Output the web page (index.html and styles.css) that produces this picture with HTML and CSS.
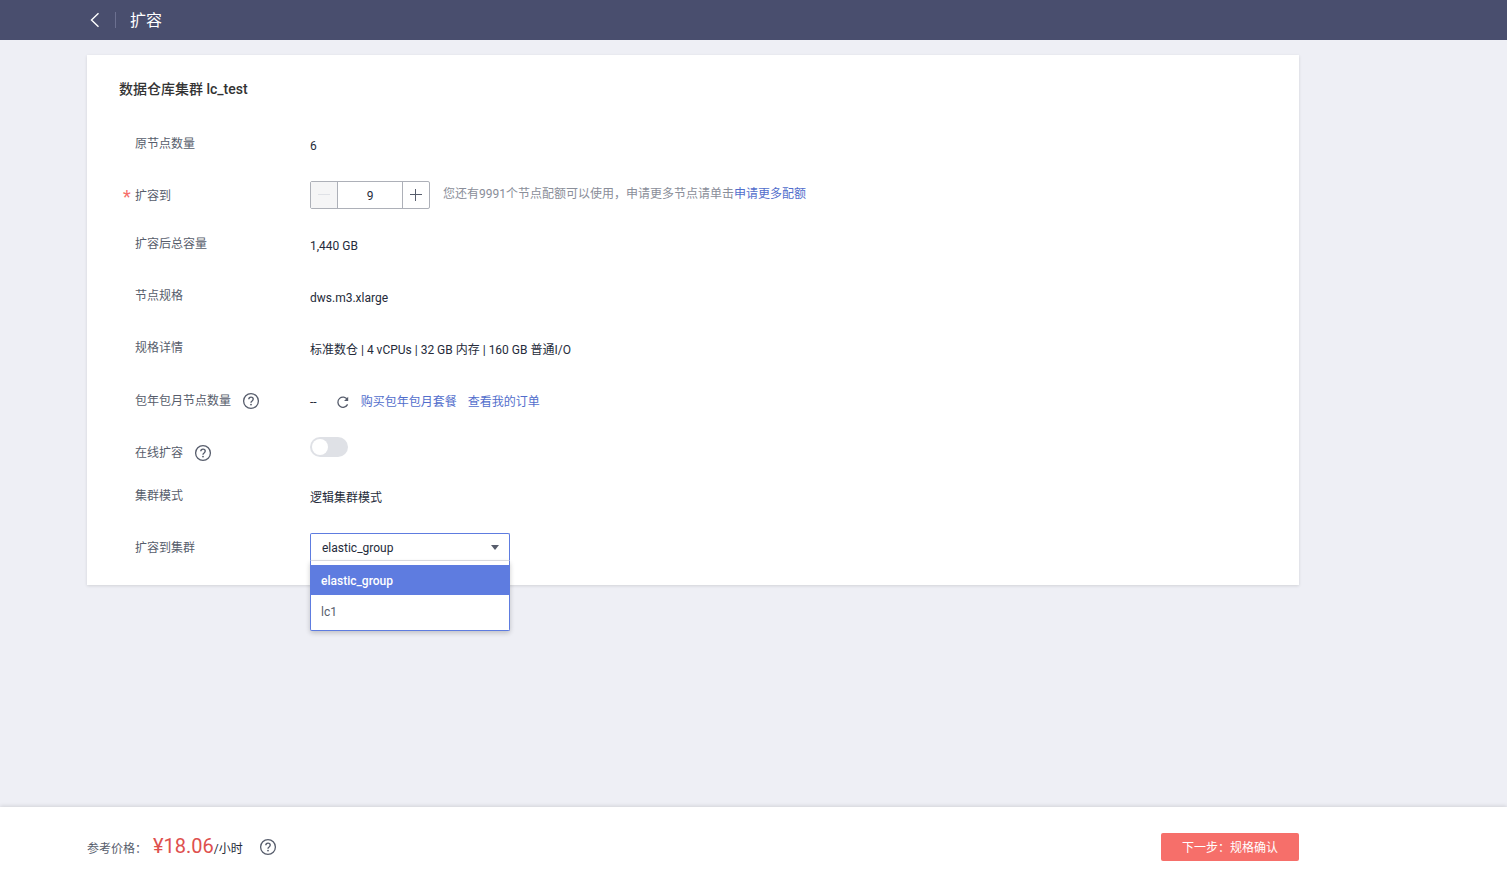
FILE: index.html
```html
<!DOCTYPE html>
<html lang="zh-CN">
<head>
  <meta charset="UTF-8">
  <meta name="viewport" content="width=device-width, initial-scale=1">
  <title>扩容</title>
  <link rel="stylesheet" href="styles.css">
</head>
<body>

  <svg class="sprite" aria-hidden="true">
    <symbol id="help" viewBox="0 0 18 18">
      <circle cx="9" cy="9" r="7.4" fill="none" stroke="currentColor" stroke-width="1.3"/>
      <path d="M6.8 7.3C6.8 5.9 7.7 5.1 9 5.1s2.2.8 2.2 2c0 .9-.5 1.4-1.1 1.9-.7.5-1.1.9-1.1 1.7" fill="none" stroke="currentColor" stroke-width="1.4"/>
      <circle cx="9" cy="12.6" r=".9" fill="currentColor"/>
    </symbol>
  </svg>

  <header class="topbar">
    <a class="back" href="#" aria-label="返回">
      <svg width="10" height="16" viewBox="0 0 10 16"><path d="M8.5 1.2L1.5 8l7 6.8" fill="none" stroke="currentColor" stroke-width="1.4"/></svg>
    </a>
    <h1>扩容</h1>
  </header>

  <main>
    <form class="card" id="resize">
      <h2>数据仓库集群 lc_test</h2>

      <div class="row">
        <span class="label">原节点数量</span>
        <div class="value">6</div>
      </div>

      <div class="row control-row">
        <label class="label required" for="nodes">扩容到</label>
        <div class="stepper">
          <button type="button" aria-label="减少" disabled>
            <svg width="12" height="12" viewBox="0 0 12 12"><path d="M0 5.5h12" stroke="currentColor"/></svg>
          </button>
          <input id="nodes" type="text" inputmode="numeric" value="9">
          <button type="button" aria-label="增加">
            <svg width="12" height="12" viewBox="0 0 12 12"><path d="M0 5.5h12M5.5 0v12" stroke="currentColor"/></svg>
          </button>
        </div>
        <p class="tip">您还有9991个节点配额可以使用，申请更多节点请单击<a href="#">申请更多配额</a></p>
      </div>

      <div class="row">
        <span class="label">扩容后总容量</span>
        <div class="value">1,440 GB</div>
      </div>

      <div class="row">
        <span class="label">节点规格</span>
        <div class="value">dws.m3.xlarge</div>
      </div>

      <div class="row">
        <span class="label">规格详情</span>
        <div class="value">标准数仓 | 4 vCPUs | 32 GB 内存 | 160 GB 普通I/O</div>
      </div>

      <div class="row package-row">
        <span class="label">包年包月节点数量
          <button type="button" class="help" aria-label="帮助"><svg><use href="#help"/></svg></button>
        </span>
        <div class="package">
          <span>--</span>
          <button type="button" class="refresh" aria-label="刷新">
            <svg width="14" height="14" viewBox="0 0 14 14"><path d="M11.6 9.4A5.1 5.1 0 1 1 11.4 4.6" fill="none" stroke="currentColor" stroke-width="1.3"/><path d="M12.2 1.8v4.1H8.1z" fill="currentColor"/></svg>
          </button>
          <a href="#">购买包年包月套餐</a>
          <a href="#">查看我的订单</a>
        </div>
      </div>

      <div class="row switch-row">
        <span class="label"><label for="online">在线扩容</label>
          <button type="button" class="help" aria-label="帮助"><svg><use href="#help"/></svg></button>
        </span>
        <input class="switch" id="online" type="checkbox" role="switch">
      </div>

      <div class="row">
        <span class="label">集群模式</span>
        <div class="value">逻辑集群模式</div>
      </div>

      <div class="row control-row">
        <label class="label" for="cluster">扩容到集群</label>
        <div class="dropdown">
          <select id="cluster">
            <option selected>elastic_group</option>
            <option>lc1</option>
          </select>
          <svg class="caret" width="8" height="5" viewBox="0 0 8 5"><path d="M0 0h8L4 5z" fill="currentColor"/></svg>
          <ul class="menu" role="listbox" aria-label="扩容到集群">
            <li class="active" role="option" aria-selected="true">elastic_group</li>
            <li role="option" aria-selected="false">lc1</li>
          </ul>
        </div>
      </div>
    </form>
  </main>

  <footer class="footer">
    <div class="footer-inner">
      <div class="price">
        <span class="price-label">参考价格：</span>
        <strong>¥18.06</strong><span>/小时</span>
        <button type="button" class="help" aria-label="帮助"><svg><use href="#help"/></svg></button>
      </div>
      <button class="next" type="submit" form="resize">下一步：规格确认</button>
    </div>
  </footer>

</body>
</html>
```
FILE: styles.css
```css
* {
  box-sizing: border-box;
}
body {
  margin: 0;
  min-height: 100vh;
  display: flex;
  flex-direction: column;
  background: #eeeff5;
  color: #252b3a;
  font-family: Roboto, "Noto Sans CJK SC", sans-serif;
  font-size: 12px;
  line-height: 20px;
}
h1, h2, p, ul {
  margin: 0;
  padding: 0;
}
button, input, select {
  font: inherit;
  color: inherit;
  margin: 0;
}
button {
  padding: 0;
  border: none;
  background: none;
  cursor: pointer;
}
svg {
  display: block;
}
a {
  color: #526ecc;
  text-decoration: none;
}
.sprite {
  position: absolute;
  width: 0;
  height: 0;
}

/* top bar */
.topbar {
  display: flex;
  align-items: center;
  height: 40px;
  padding-left: 90px;
  background: #494e6e;
  color: #fff;
}
.back {
  padding-right: 15px;
  border-right: 1px solid #6c7090;
  color: #fff;
}
.topbar h1 {
  margin-left: 14px;
  padding-top: 2px;
  font-size: 16px;
  font-weight: 400;
}

/* form card */
main {
  flex: 1;
  padding: 15px 87px;
}
.card {
  max-width: 1212px;
  padding: 24px 32px;
  background: #fff;
  box-shadow: 0 1px 3px rgba(0, 0, 0, 0.12);
}
.card h2 {
  margin-bottom: 35px;
  color: #333;
  font-size: 14px;
  font-weight: 500;
}
.row {
  display: flex;
  align-items: flex-start;
  margin-bottom: 30px;
  padding-left: 16px;
}
.label {
  position: relative;
  display: flex;
  align-items: center;
  flex: none;
  gap: 11px;
  width: 175px;
  color: #575d6c;
}
.value {
  padding-top: 2px;
}
.control-row {
  margin-top: -5px;
  margin-bottom: 25px;
}
.control-row .label {
  height: 28px;
  padding-top: 2px;
}
.row:last-child {
  margin-bottom: 0;
}
.required::before {
  content: "*";
  position: absolute;
  left: -12px;
  top: 6px;
  color: #f66f6a;
  font-size: 18px;
}
.help {
  width: 18px;
  height: 18px;
  color: #575d6c;
}
.help svg {
  width: 18px;
  height: 18px;
}

.stepper {
  display: flex;
  width: 120px;
  height: 28px;
  border: 1px solid #adb0b8;
  border-radius: 2px;
}
.stepper button {
  display: flex;
  align-items: center;
  justify-content: center;
  width: 26px;
  color: #575d6c;
}
.stepper button:disabled {
  background: #f5f5f6;
  color: #dfe1e6;
}
.stepper input {
  flex: 1;
  min-width: 0;
  padding: 2px 0 0;
  border: solid #adb0b8;
  border-width: 0 1px;
  outline: none;
  text-align: center;
}
.tip {
  margin-left: 13px;
  padding-top: 3px;
  color: #8a8e99;
}

.package-row {
  align-items: center;
  height: 22px;
}
.package {
  display: flex;
  align-items: center;
  padding-top: 2px;
}
.refresh {
  margin: 0 11px 0 19px;
  color: #575d6c;
}
.package a + a {
  margin-left: 11px;
}

.switch-row {
  margin-top: -5px;
  margin-bottom: 23px;
}
.switch-row .label {
  padding-top: 6px;
}
.switch {
  appearance: none;
  display: flex;
  align-items: center;
  width: 38px;
  height: 20px;
  padding: 2px;
  border-radius: 10px;
  background: #dfe1e6;
  cursor: pointer;
}
.switch::before {
  content: "";
  width: 16px;
  height: 16px;
  border-radius: 50%;
  background: #fff;
}
.switch:checked {
  justify-content: flex-end;
  background: #5e7ce0;
}

.dropdown {
  position: relative;
  width: 200px;
}
.dropdown select {
  appearance: none;
  display: block;
  width: 100%;
  height: 28px;
  padding: 2px 30px 0 11px;
  border: 1px solid #5e7ce0;
  border-bottom-color: #dfe1e6;
  border-radius: 2px 2px 0 0;
  outline: none;
  background: #fff;
}
.caret {
  position: absolute;
  right: 11px;
  top: 12px;
  color: #575d6c;
  pointer-events: none;
}
.menu {
  position: absolute;
  top: 28px;
  left: 0;
  right: 0;
  padding: 4px 0;
  list-style: none;
  background: #fff;
  border: 1px solid #5e7ce0;
  border-top: none;
  border-radius: 0 0 2px 2px;
  box-shadow: 0 2px 5px rgba(0, 0, 0, 0.2);
}
.menu li {
  height: 30px;
  padding: 0 10px;
  line-height: 32px;
  color: #575d6c;
}
.menu li + li {
  margin-top: 1px;
}
.menu .active {
  background: #5e7ce0;
  color: #fff;
  font-weight: 500;
}

/* price bar */
.footer {
  padding: 26px 87px 15px;
  background: #fff;
  box-shadow: 0 -1px 4px rgba(0, 0, 0, 0.12);
}
.footer-inner {
  display: flex;
  align-items: center;
  justify-content: space-between;
  max-width: 1212px;
  height: 28px;
}
.price {
  display: flex;
  align-items: baseline;
  line-height: 28px;
}
.price-label {
  margin-right: 6px;
  color: #575d6c;
}
.price strong {
  color: #de504e;
  font-size: 20px;
  font-weight: 400;
}
.price .help {
  align-self: center;
  margin-left: 16px;
}
.next {
  width: 138px;
  height: 28px;
  padding-top: 2px;
  border-radius: 2px;
  background: #f66f6a;
  color: #fff;
}
```
